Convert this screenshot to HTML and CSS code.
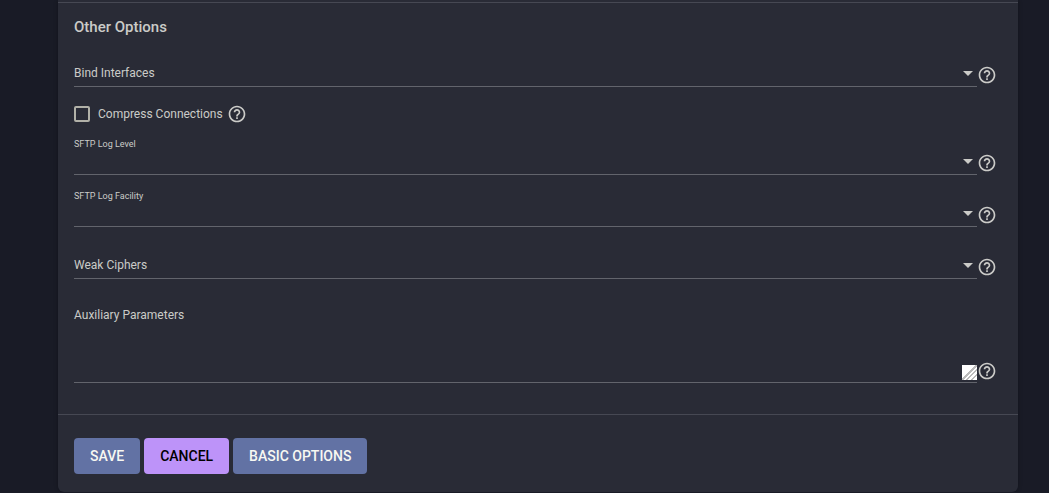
FILE: index.html
```html
<!DOCTYPE html>
<html lang="en">
<head>
<meta charset="utf-8">
<title>SFTP Options</title>
<link rel="stylesheet" href="styles.css">
</head>
<body>

<svg width="0" height="0" class="defs">
  <symbol id="help" viewBox="0 0 24 24">
    <path d="M11 18h2v-2h-2v2zm1-16C6.48 2 2 6.48 2 12s4.48 10 10 10 10-4.48 10-10S17.52 2 12 2zm0 18c-4.41 0-8-3.59-8-8s3.59-8 8-8 8 3.59 8 8-3.59 8-8 8zm0-14c-2.21 0-4 1.79-4 4h2c0-1.1.9-2 2-2s2 .9 2 2c0 2-3 1.75-3 5h2c0-2.25 3-2.5 3-5 0-2.21-1.79-4-4-4z"/>
  </symbol>
</svg>

<form class="card">
  <fieldset class="options">
    <legend class="title">Other Options</legend>

    <div class="row">
      <div class="field">
        <label for="bind">Bind Interfaces</label>
        <select id="bind"><option></option></select>
      </div>
      <svg class="help"><use href="#help"/></svg>
    </div>

    <div class="row check">
      <input type="checkbox" id="compress">
      <label for="compress">Compress Connections</label>
      <svg class="help"><use href="#help"/></svg>
    </div>

    <div class="row">
      <div class="field floating">
        <label for="loglevel">SFTP Log Level</label>
        <select id="loglevel"><option></option></select>
      </div>
      <svg class="help"><use href="#help"/></svg>
    </div>

    <div class="row">
      <div class="field floating">
        <label for="logfacility">SFTP Log Facility</label>
        <select id="logfacility"><option></option></select>
      </div>
      <svg class="help"><use href="#help"/></svg>
    </div>

    <div class="row">
      <div class="field">
        <label for="ciphers">Weak Ciphers</label>
        <select id="ciphers"><option></option></select>
      </div>
      <svg class="help"><use href="#help"/></svg>
    </div>

    <div class="row">
      <div class="field area">
        <label for="aux">Auxiliary Parameters</label>
        <textarea id="aux"></textarea>
      </div>
      <svg class="help"><use href="#help"/></svg>
    </div>
  </fieldset>

  <div class="actions">
    <button type="submit" class="btn">Save</button>
    <button type="button" class="btn cancel">Cancel</button>
    <button type="button" class="btn">Basic Options</button>
  </div>
</form>

</body>
</html>
```

FILE: styles.css
```css
* {
  box-sizing: border-box;
}

body {
  margin: 0;
  padding: 0 31px 0 58px;
  background: #191b26;
  color: #cbcbc8;
  font: 12px/16px Roboto, sans-serif;
}

.defs {
  display: block;
}

.card {
  padding-top: 2px;
  background: #292b36;
  border-radius: 0 0 6px 6px;
  box-shadow: 0 0 4px rgba(0, 0, 0, .3);
}

.options {
  display: flex;
  flex-direction: column;
  gap: 12px;
  min-width: 0;
  margin: 0;
  padding: 14px 21px 31px 16px;
  border: 0;
  border-top: 1px solid #464853;
}

.title {
  float: left;
  margin-bottom: -2px;
  padding: 0;
  font-size: 15px;
  font-weight: 500;
  line-height: 20px;
}

.row {
  display: flex;
  align-items: flex-end;
}

/* label and control share one grid cell, the label on top */
.field {
  display: grid;
  flex: 1;
  height: 40px;
  border-bottom: 1px solid #62646c;
}

.field > * {
  grid-area: 1 / 1;
}

.field label {
  z-index: 1;
  align-self: end;
  padding-bottom: 5px;
  pointer-events: none;
}

.field.floating label {
  align-self: start;
  padding: 3px 0 0;
  font-size: 9px;
  line-height: 12px;
}

.field::after {
  content: "";
  grid-area: 1 / 1;
  place-self: end;
  margin: 0 4px 10px 0;
  border: 5px solid transparent;
  border-top-color: #cbcbc8;
  border-bottom: 0;
  pointer-events: none;
}

select,
textarea {
  width: 100%;
  margin: 0;
  padding: 0;
  border: 0;
  outline: 0;
  background: none;
  color: inherit;
  font: inherit;
}

select {
  appearance: none;
  align-self: end;
  height: 24px;
}

.help {
  flex: none;
  width: 20px;
  height: 20px;
  margin-bottom: 2px;
  fill: #cbcbc8;
}

.check {
  align-items: center;
  gap: 4px;
  margin-bottom: -1px;
  padding: 5px 0 0;
}

.check input {
  appearance: none;
  width: 16px;
  height: 16px;
  margin: 0 4px 0 0;
  border: 2px solid #b1b1a8;
  border-radius: 2px;
}

.check .help {
  margin: 0;
}

.field.area {
  height: 92px;
  padding-bottom: 2px;
}

.area label {
  align-self: start;
  padding: 16px 0 0;
}

.area::after {
  display: none;
}

textarea {
  align-self: end;
  height: 58px;
  overflow-y: scroll;
  resize: vertical;
}

textarea::-webkit-scrollbar {
  width: 16px;
  height: 16px;
  background: transparent;
}

textarea::-webkit-resizer {
  background: linear-gradient(135deg, #fff 46%, #bbb 46% 54%, #fff 54% 62%, #bbb 62% 70%, #fff 70% 78%, #bbb 78% 86%, #fff 86%);
}

.actions {
  display: flex;
  gap: 4px;
  padding: 23px 16px 18px;
  border-top: 1px solid #464853;
}

.btn {
  height: 36px;
  padding: 0 16px;
  border: 0;
  border-radius: 4px;
  background: #6272a4;
  color: #f8f8f2;
  font: 500 14px/36px Roboto, sans-serif;
  text-transform: uppercase;
}

.btn.cancel {
  background: #bd93f9;
  color: #000;
}
```
